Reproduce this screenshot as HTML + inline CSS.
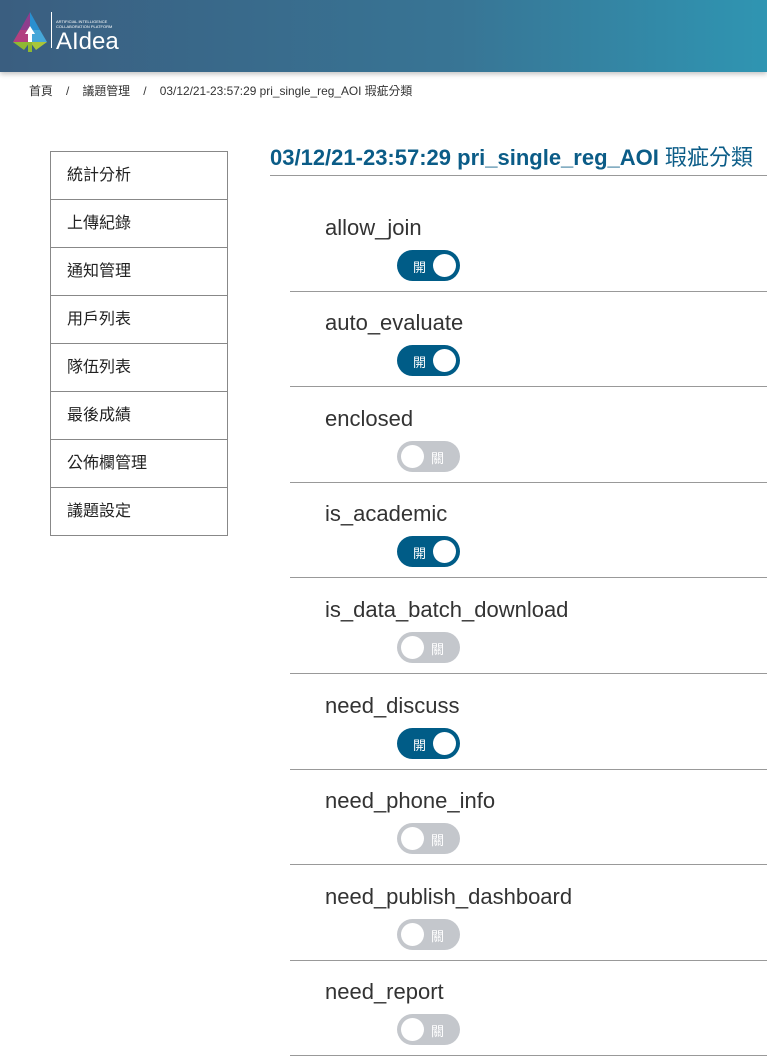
<!DOCTYPE html>
<html><head><meta charset="utf-8"><style>
*{margin:0;padding:0;box-sizing:border-box}
body{width:767px;height:1024px;overflow:hidden;background:#fff;font-family:"Liberation Sans","Noto Sans CJK TC",sans-serif;color:#333;position:relative}
.hdr{position:absolute;left:0;top:0;width:767px;height:72px;background:linear-gradient(90deg,#3a5e80 0%,#387595 60%,#2f95b2 100%);box-shadow:0 2px 5px rgba(0,0,0,.25)}
.bc{position:absolute;left:29px;top:82px;font-size:11.9px;color:#333;white-space:pre}
.side{position:absolute;left:50px;top:151px;width:178px;border:1px solid #888}
.side div{height:48px;line-height:47px;padding-left:16px;font-size:16px;border-top:1px solid #888;color:#222}
.side div:first-child{border-top:none;height:47px}
.title{position:absolute;left:270px;top:140px;font-size:22px;color:#0b5c87;white-space:nowrap}
.tl{position:absolute;left:270px;top:175px;width:497px;height:1px;background:#999}
.row{position:absolute;left:290px;width:477px;height:96px;border-bottom:1px solid #999}
.row .lb{position:absolute;left:35px;top:19px;font-size:22px;color:#333}
.tg{position:absolute;left:107px;top:54px;width:63px;height:31px;border-radius:16px;font-size:13px;color:#fff}
.on{background:#005c87}.off{background:#c4c7cc}
.tg .k{position:absolute;top:4px;width:23px;height:23px;border-radius:50%;background:#fff}
.on .k{right:4px}.off .k{left:4px}
.on span{position:absolute;left:16px;top:7px}.off span{position:absolute;left:34px;top:7px}
</style></head><body>
<div class="hdr">
<svg width="130" height="56" viewBox="0 0 130 56" style="position:absolute;left:10px;top:8px">
<polygon points="20,4 10,22 20,22" fill="#8e3d8d"/><polygon points="20,4 30,22 20,22" fill="#2a8fd0"/>
<polygon points="10,22 3,34 20,34 20,22" fill="#b2407f"/><polygon points="30,22 37,34 20,34 20,22" fill="#46a7d8"/>
<polygon points="3,34 14,42 20,34" fill="#8fb832"/><polygon points="37,34 26,42 20,34" fill="#a9c63a"/>
<rect x="18" y="34" width="4" height="10" fill="#8fb832"/>
<polygon points="20,18 15,26 18,26 18,34 22,34 22,26 25,26" fill="#fff"/>
<rect x="41" y="4" width="1" height="36" fill="#fff"/>
<text x="46" y="15" font-size="4" fill="#fff" font-family="Liberation Sans">ARTIFICIAL INTELLIGENCE</text>
<text x="46" y="20" font-size="4" fill="#fff" font-family="Liberation Sans">COLLABORATION PLATFORM</text>
<text x="46" y="41" font-size="24" fill="#fff" font-family="Liberation Sans">AIdea</text>
</svg>
</div>
<div class="bc">首頁    /    議題管理    /    03/12/21-23:57:29 pri_single_reg_AOI 瑕疵分類</div>
<div class="side"><div>統計分析</div><div>上傳紀錄</div><div>通知管理</div><div>用戶列表</div><div>隊伍列表</div><div>最後成績</div><div>公佈欄管理</div><div>議題設定</div></div>
<div class="title"><b>03/12/21-23:57:29 pri_single_reg_AOI</b> 瑕疵分類</div>
<div class="tl"></div>
<div class="row" style="top:196px"><div class="lb">allow_join</div><div class="tg on"><span>開</span><div class="k"></div></div></div>
<div class="row" style="top:291px"><div class="lb">auto_evaluate</div><div class="tg on"><span>開</span><div class="k"></div></div></div>
<div class="row" style="top:387px"><div class="lb">enclosed</div><div class="tg off"><span>關</span><div class="k"></div></div></div>
<div class="row" style="top:482px"><div class="lb">is_academic</div><div class="tg on"><span>開</span><div class="k"></div></div></div>
<div class="row" style="top:578px"><div class="lb">is_data_batch_download</div><div class="tg off"><span>關</span><div class="k"></div></div></div>
<div class="row" style="top:674px"><div class="lb">need_discuss</div><div class="tg on"><span>開</span><div class="k"></div></div></div>
<div class="row" style="top:769px"><div class="lb">need_phone_info</div><div class="tg off"><span>關</span><div class="k"></div></div></div>
<div class="row" style="top:865px"><div class="lb">need_publish_dashboard</div><div class="tg off"><span>關</span><div class="k"></div></div></div>
<div class="row" style="top:960px"><div class="lb">need_report</div><div class="tg off"><span>關</span><div class="k"></div></div></div>
</body></html>
